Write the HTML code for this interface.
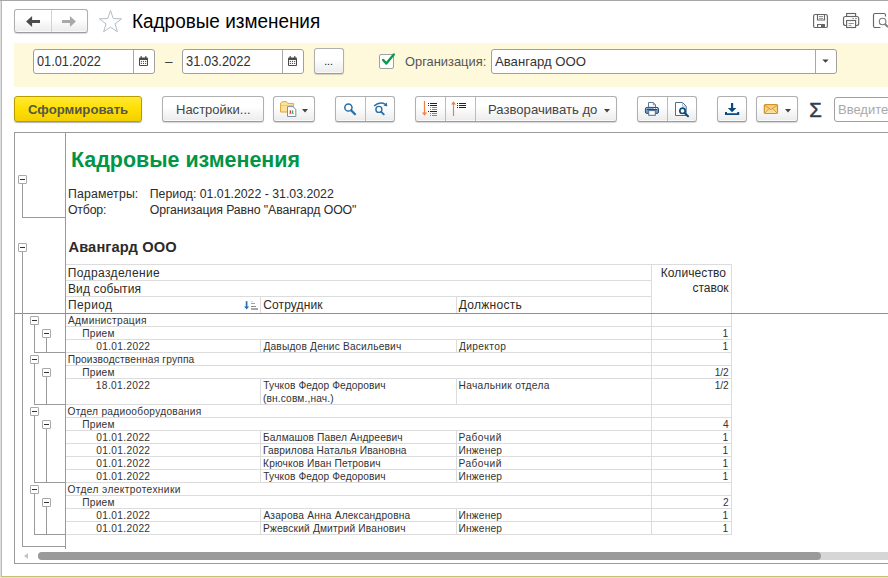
<!DOCTYPE html><html lang="ru"><head><meta charset="utf-8"><title>Кадровые изменения</title><style>
    *{box-sizing:border-box;margin:0;padding:0}
    html,body{width:888px;height:578px;overflow:hidden;background:#fff}
    body{position:relative;font-family:"Liberation Sans",sans-serif;font-size:13.33px;color:#333}
    .abs,.t,.btn,.inp,.ln,svg{position:absolute}
    .t{white-space:pre;line-height:1;transform-origin:0 0}
    .btn{border:1px solid #b0b0b0;border-bottom-color:#9c9c9c;border-radius:3px;background:linear-gradient(#ffffff 0%,#ffffff 40%,#ebebeb 100%);box-shadow:0 1px 1px rgba(0,0,0,.16),inset 0 -1px 0 rgba(255,255,255,.7)}
    .btn .sep{position:absolute;top:0;bottom:0;width:1px;background:#bcbcbc}
    .inp{border:1px solid #a0a0a0;border-radius:3px;background:#fff}
    .inp .sep{position:absolute;top:0;bottom:0;width:1px;background:#a8a8a8}
    .ln{background:#9a9a9a}
    .gl{position:absolute;background:#dcdcdc}
    .bx{position:absolute;width:9px;height:9px;border:1px solid #a8a8a8;background:#fff;border-radius:1px}
    .bx:after{content:"";position:absolute;left:1px;top:3px;width:5px;height:1px;background:#333}
    </style></head><body>
<div class="abs" style="left:0px;top:0px;width:888px;height:1px;background:#a6a6a6"></div>
<div class="abs" style="left:0px;top:1px;width:1px;height:577px;background:#dedede"></div>
<div class="abs" style="left:1px;top:1px;width:1px;height:576px;background:#cdbd72"></div>
<div class="abs" style="left:1px;top:576px;width:887px;height:1px;background:#cdbd72"></div>
<div class="abs" style="left:0px;top:577px;width:888px;height:1px;background:#dfe3e6"></div>
<div class="btn" style="left:14px;top:9px;width:74px;height:24px;"><div class="sep" style="left:36px;background:#d2d2d2"></div></div>
<svg style="left:14px;top:9px" width="74" height="24" viewBox="0 0 74 24" ><path d="M12.1 12.45 L18.1 6.9 V10.95 H26 V13.95 H18.1 V18 Z" fill="#4a4a4a"/><path d="M61.9 12.45 L55.9 6.9 V10.95 H48 V13.95 H55.9 V18 Z" fill="#a9a9a9"/></svg>
<svg style="left:98px;top:9px" width="26" height="26" viewBox="0 0 26 26" ><path d="M12.5 1.5 L15.3 9.6 L23.5 9.8 L17 14.9 L19.4 22.8 L12.5 18.1 L5.6 22.8 L8 14.9 L1.5 9.8 L9.7 9.6 Z" fill="none" stroke="#b4bcc4" stroke-width="1"/></svg>
<div class="t" style="left:132.00px;top:11px;font-size:20px;color:#000;transform:scaleX(0.9467);">Кадровые изменения</div>
<svg style="left:812px;top:12px" width="76" height="18" viewBox="0 0 76 18" ><g fill="none" stroke="#666" stroke-width="1.15"><rect x="1.6" y="2.5" width="13.8" height="13" rx="1.6"/><path d="M5.5 2.5 V8 H12.5 V2.5"/><path d="M7 4.5 H11 M7 6.4 H11" stroke="#777" stroke-width="0.8"/><path d="M5.6 15.5 V12.5 H12.4 V15.5"/><rect x="9" y="13" width="3" height="2.4" fill="#666" stroke="none"/><rect x="31.5" y="4.5" width="15.2" height="9" rx="2"/><rect x="34.6" y="1.5" width="9" height="3" fill="#fff"/><rect x="34.6" y="8.5" width="9" height="7" fill="#fff"/><path d="M36.6 11.5 H41.8 M36.6 13.4 H39.4" stroke="#777" stroke-width="0.8"/><path d="M40.3 6.6 H42 M43 6.6 H45" stroke="#777" stroke-width="0.8"/><path d="M73.5 4.6 V3 a1.5 1.5 0 0 0 -1.5 -1.5 H63 a1.5 1.5 0 0 0 -1.5 1.5 V14 a1.5 1.5 0 0 0 1.5 1.5 H68.4"/><circle cx="70.6" cy="9.5" r="3.3" stroke="#7a7a7a" stroke-width="1.1"/><path d="M73 12 L76 15" stroke-width="1.9" stroke="#7a7a7a"/></g></svg>
<div class="abs" style="left:14px;top:43px;width:874px;height:44px;background:#fff9db"></div>
<div class="inp" style="left:33px;top:49px;width:122px;height:25px;"><div class="sep" style="left:99px"></div></div>
<div class="t" style="left:37.00px;top:54px;font-size:14px;color:#333;transform:scaleX(0.9122);">01.01.2022</div>
<svg style="left:139px;top:56px" width="9" height="10" viewBox="0 0 9 10" ><g fill="#4a4a4a"><rect x="0" y="1.5" width="9" height="8.5" rx="1"/><rect x="1.6" y="0" width="1.2" height="2.2" rx=".5"/><rect x="6.2" y="0" width="1.2" height="2.2" rx=".5"/></g><rect x="1" y="4" width="7" height="5" fill="#fff"/><g fill="#4a4a4a"><rect x="1.8" y="4.9" width="1.1" height="1.1"/><rect x="3.95" y="4.9" width="1.1" height="1.1"/><rect x="6.1" y="4.9" width="1.1" height="1.1"/><rect x="1.8" y="6.9" width="1.1" height="1.1"/><rect x="3.95" y="6.9" width="1.1" height="1.1"/><rect x="6.1" y="6.9" width="1.1" height="1.1"/></g></svg>
<div class="inp" style="left:182px;top:49px;width:122px;height:25px;"><div class="sep" style="left:99px"></div></div>
<div class="t" style="left:186.00px;top:54px;font-size:14px;color:#333;transform:scaleX(0.9223);">31.03.2022</div>
<svg style="left:288px;top:56px" width="9" height="10" viewBox="0 0 9 10" ><g fill="#4a4a4a"><rect x="0" y="1.5" width="9" height="8.5" rx="1"/><rect x="1.6" y="0" width="1.2" height="2.2" rx=".5"/><rect x="6.2" y="0" width="1.2" height="2.2" rx=".5"/></g><rect x="1" y="4" width="7" height="5" fill="#fff"/><g fill="#4a4a4a"><rect x="1.8" y="4.9" width="1.1" height="1.1"/><rect x="3.95" y="4.9" width="1.1" height="1.1"/><rect x="6.1" y="4.9" width="1.1" height="1.1"/><rect x="1.8" y="6.9" width="1.1" height="1.1"/><rect x="3.95" y="6.9" width="1.1" height="1.1"/><rect x="6.1" y="6.9" width="1.1" height="1.1"/></g></svg>
<div class="t" style="left:165.00px;top:55px;font-size:13.6px;color:#333;">–</div>
<div class="btn" style="left:314px;top:48px;width:30px;height:26px;"></div>
<div class="t" style="left:324.17px;top:56px;font-size:10.67px;color:#111;letter-spacing:-0.048px;">...</div>
<div class="abs" style="left:379px;top:54px;width:15px;height:15px;border:1px solid #a0a0a0;border-radius:2px;background:#fff"></div>
<svg style="left:379px;top:50px" width="18" height="18" viewBox="0 0 18 18" ><path d="M4.2 9.9 L7.3 13.6 L14.8 4.4" fill="none" stroke="#0a9a4a" stroke-width="2.4" stroke-linecap="round" stroke-linejoin="round"/></svg>
<div class="t" style="left:405.00px;top:55px;font-size:13.6px;color:#555;transform:scaleX(0.9471);">Организация:</div>
<div class="inp" style="left:491px;top:49px;width:346px;height:25px;"><div class="sep" style="left:323px"></div></div>
<div class="t" style="left:495.00px;top:55px;font-size:13.6px;color:#333;transform:scaleX(0.9674);">Авангард ООО</div>
<svg style="left:822px;top:59px" width="7" height="4" viewBox="0 0 7 4" ><path d="M0.3 0.5 H6.7 L3.5 3.8 Z" fill="#444"/></svg>
<div class="abs" style="left:14px;top:96px;width:128px;height:26px;border:1px solid #b89c00;border-radius:3px;background:linear-gradient(#ffe838 0%,#ffe000 50%,#f2cf00 100%);box-shadow:0 1px 1px rgba(0,0,0,.3)"></div>
<div class="t" style="left:28.00px;top:103px;font-size:13.6px;color:#56564a;transform:scaleX(0.9671);font-weight:bold;">Сформировать</div>
<div class="btn" style="left:162px;top:96px;width:102px;height:26px;"></div>
<div class="t" style="left:176.00px;top:103px;font-size:13.6px;color:#444;transform:scaleX(0.9567);">Настройки...</div>
<div class="btn" style="left:273px;top:96px;width:42px;height:26px;"></div>
<svg style="left:279px;top:100px" width="20" height="18" viewBox="0 0 20 18" ><path d="M1.5 12 V3.2 L3.5 1.6 H7.2 L9 3.4 H14.4 V12 Z" fill="#fbe19a" stroke="#e0a838" stroke-width="1"/><path d="M1.5 5.5 H14.4" stroke="#f3c766" stroke-width="1"/><path d="M8.5 6.6 H14 L16.8 9.3 V16.5 H8.5 Z" fill="#fff" stroke="#7c8e9c" stroke-width="1" stroke-linejoin="round"/><rect x="10.7" y="10.4" width="1.3" height="3" fill="#e03030"/><rect x="12.9" y="10.4" width="1.3" height="3" fill="#30a850"/><rect x="10" y="13.4" width="5" height="0.7" fill="#999"/></svg>
<svg style="left:302px;top:109px" width="6" height="4" viewBox="0 0 6 4" ><path d="M0 0 H6 L3 3.5 Z" fill="#444"/></svg>
<div class="btn" style="left:335px;top:96px;width:60px;height:26px;"><div class="sep" style="left:29px"></div></div>
<svg style="left:340px;top:100px" width="50" height="18" viewBox="0 0 50 18" ><g fill="none" stroke="#2a6ea6"><circle cx="8.4" cy="7.5" r="3.6" stroke-width="1.5"/><path d="M11.2 10.4 L15 14.2" stroke-width="2.2" stroke-linecap="round"/><circle cx="38.9" cy="9.4" r="3" stroke-width="1.4"/><path d="M41.2 11.8 L43.8 14.4" stroke-width="1.9" stroke-linecap="round"/><path d="M34.2 5.8 Q39.6 1.4 45.2 4.2" stroke-width="1.5"/></g><path d="M46.9 2.4 L47.3 6.6 L43.4 5.4 Z" fill="#2a6ea6"/></svg>
<div class="btn" style="left:415px;top:96px;width:202px;height:26px;"><div class="sep" style="left:29px"></div><div class="sep" style="left:59px"></div></div>
<svg style="left:420px;top:100px" width="50" height="18" viewBox="0 0 50 18" ><g stroke="#f08040" fill="#f08040"><path d="M4.5 1 V14" stroke-width="1.2"/><path d="M2 12.6 H7 L4.5 15.8 Z" stroke="none"/><path d="M33.5 3 V16" stroke-width="1.2"/><path d="M31 4.4 H36 L33.5 1.2 Z" stroke="none"/></g><g fill="#222"><rect x="8" y="3" width="1" height="1"/><rect x="10" y="3" width="7" height="1"/><rect x="8" y="5" width="1" height="1"/><rect x="10" y="5" width="7" height="1"/><rect x="8" y="11" width="1" height="1"/><rect x="10" y="11" width="7" height="1"/><rect x="37" y="3" width="1" height="1"/><rect x="39" y="3" width="7" height="1"/><rect x="37" y="5" width="1" height="1"/><rect x="39" y="5" width="7" height="1"/><rect x="37" y="7" width="1" height="1"/><rect x="39" y="7" width="7" height="1"/></g><g fill="#8a8a8a"><rect x="10" y="7" width="1" height="1"/><rect x="12" y="7" width="5" height="1"/><rect x="10" y="9" width="1" height="1"/><rect x="12" y="9" width="5" height="1"/><rect x="10" y="13" width="1" height="1"/><rect x="12" y="13" width="5" height="1"/><rect x="10" y="15" width="1" height="1"/><rect x="12" y="15" width="5" height="1"/></g></svg>
<div class="t" style="left:488.00px;top:103px;font-size:13.6px;color:#444;transform:scaleX(0.9653);">Разворачивать до</div>
<svg style="left:604px;top:109px" width="6" height="4" viewBox="0 0 6 4" ><path d="M0 0 H6 L3 3.5 Z" fill="#444"/></svg>
<div class="btn" style="left:637px;top:96px;width:60px;height:26px;"><div class="sep" style="left:29px"></div></div>
<svg style="left:642px;top:100px" width="50" height="18" viewBox="0 0 50 18" ><path d="M6.5 7.4 V2.5 H11.3 L13.5 4.8 V7.4" fill="#fff" stroke="#64798f" stroke-width="1"/><path d="M11.3 2.5 V4.8 H13.5" fill="none" stroke="#64798f" stroke-width="0.8"/><rect x="3.4" y="7.4" width="13.1" height="6" rx="1.5" fill="#6f99c4" stroke="#1f4f80" stroke-width="1"/><rect x="4" y="8" width="11.9" height="1" fill="#86a9cf"/><rect x="5" y="9" width="10" height="1" fill="#274a72"/><rect x="11.9" y="8" width="1.1" height="1" fill="#fff"/><rect x="14" y="8" width="1.1" height="1" fill="#fff"/><rect x="6.7" y="10.6" width="6.6" height="4.7" fill="#fff" stroke="#4f6f8f" stroke-width="1"/><path d="M33.5 2.5 H40.5 L44.2 6.2 V15.5 H33.5 Z" fill="#fff" stroke="#4f6f8f" stroke-width="1" stroke-linejoin="round"/><path d="M40.5 2.5 V6.2 H44.2" fill="none" stroke="#9ab" stroke-width="0.8"/><circle cx="40.5" cy="10.8" r="2.7" fill="#fff" stroke="#0c4c7c" stroke-width="1.7"/><path d="M42.6 13 L46 16.2" stroke="#0c4c7c" stroke-width="2.1" stroke-linecap="round"/></svg>
<div class="btn" style="left:717px;top:96px;width:30px;height:26px;"></div>
<svg style="left:724px;top:102px" width="16" height="14" viewBox="0 0 16 14" ><g fill="#0a4a80"><rect x="7" y="1" width="2.2" height="6"/><path d="M3.8 6 H12.4 L8.1 10.2 Z"/><path d="M1 10 H3 V11.2 H13.2 V10 H15.2 V13 H1 Z"/></g></svg>
<div class="btn" style="left:756px;top:96px;width:42px;height:26px;"></div>
<svg style="left:763px;top:103px" width="16" height="12" viewBox="0 0 16 12" ><defs><linearGradient id="eg" x1="0" y1="0" x2="0" y2="1"><stop offset="0" stop-color="#f3c772"/><stop offset="1" stop-color="#fae3a6"/></linearGradient></defs><rect x="1.3" y="1.5" width="13.2" height="9" rx="1.2" fill="url(#eg)" stroke="#cf9228" stroke-width="1.2"/><path d="M2 2.3 L7.9 6.6 L13.8 2.3 M2 9.8 L6 5.6 M13.8 9.8 L9.8 5.6" fill="none" stroke="#d49a34" stroke-width="1"/></svg>
<svg style="left:785px;top:109px" width="6" height="4" viewBox="0 0 6 4" ><path d="M0 0 H6 L3 3.5 Z" fill="#444"/></svg>
<div class="t" style="left:809.25px;top:100px;font-size:20.3px;color:#2c3e52;-webkit-text-stroke:0.55px #2c3e52;">Σ</div>
<div class="inp" style="left:834px;top:97px;width:60px;height:25px;"></div>
<div class="t" style="left:838.00px;top:103px;font-size:13.6px;color:#a9a9a9;transform:scaleX(0.9550);">Введите</div>
<div class="ln" style="left:14px;top:132px;width:874px;height:1px;"></div>
<div class="ln" style="left:14px;top:132px;width:1px;height:432px;"></div>
<div class="ln" style="left:65px;top:132px;width:1px;height:417px;"></div>
<div class="ln" style="left:14px;top:563px;width:874px;height:1px;"></div>
<div class="abs" style="left:38px;top:552px;width:850px;height:8px;background:#d6d6d6;border-radius:4px 0 0 4px"></div>
<div class="abs" style="left:38px;top:552px;width:783px;height:8px;background:#9a9a9a;border-radius:4px"></div>
<svg style="left:24px;top:553px" width="4" height="6" viewBox="0 0 4 6" ><path d="M4 0 V6 L0 3 Z" fill="#c4c4c4"/></svg>
<div class="t" style="left:71.00px;top:149px;font-size:22.2px;color:#009646;transform:scaleX(0.9658);font-weight:bold;">Кадровые изменения</div>
<div class="t" style="left:67.99px;top:188px;font-size:12.3px;color:#2b2b2b;letter-spacing:0.149px;">Параметры:</div>
<div class="t" style="left:149.79px;top:188px;font-size:12.3px;color:#2b2b2b;">Период: 01.01.2022 - 31.03.2022</div>
<div class="t" style="left:67.92px;top:204px;font-size:12.3px;color:#2b2b2b;letter-spacing:-0.171px;">Отбор:</div>
<div class="t" style="left:149.72px;top:204px;font-size:12.3px;color:#2b2b2b;letter-spacing:-0.094px;">Организация Равно "Авангард ООО"</div>
<div class="t" style="left:68.47px;top:240px;font-size:14.67px;color:#2b2b2b;letter-spacing:0.119px;font-weight:bold;">Авангард ООО</div>
<div class="gl" style="left:66px;top:264px;width:586px;height:1px;"></div>
<div class="gl" style="left:66px;top:280px;width:586px;height:1px;"></div>
<div class="gl" style="left:66px;top:296px;width:586px;height:1px;"></div>
<div class="gl" style="left:652px;top:264px;width:80px;height:1px;"></div>
<div class="gl" style="left:651px;top:264px;width:1px;height:49px;"></div>
<div class="gl" style="left:731px;top:264px;width:1px;height:49px;"></div>
<div class="gl" style="left:260px;top:297px;width:1px;height:16px;"></div>
<div class="gl" style="left:456px;top:297px;width:1px;height:16px;"></div>
<div class="t" style="left:67.81px;top:267px;font-size:12px;color:#2b2b2b;letter-spacing:0.377px;">Подразделение</div>
<div class="t" style="left:68.01px;top:283px;font-size:12px;color:#2b2b2b;letter-spacing:0.093px;">Вид события</div>
<div class="t" style="left:68.01px;top:299px;font-size:12px;color:#2b2b2b;letter-spacing:0.393px;">Период</div>
<div class="t" style="left:263.14px;top:299px;font-size:12px;color:#2b2b2b;letter-spacing:0.148px;">Сотрудник</div>
<div class="t" style="left:458.80px;top:299px;font-size:12px;color:#2b2b2b;letter-spacing:0.274px;">Должность</div>
<div class="t" style="left:660.71px;top:267px;font-size:12px;color:#2b2b2b;letter-spacing:0.092px;">Количество</div>
<div class="t" style="left:692.42px;top:282px;font-size:12px;color:#2b2b2b;">ставок</div>
<svg style="left:243px;top:300px" width="16" height="12" viewBox="0 0 16 12" ><path d="M3.6 1.2 V8" stroke="#2a6fb0" stroke-width="1.7"/><path d="M1.1 6.6 H6.1 L3.6 9.6 Z" fill="#2a6fb0"/><rect x="8" y="1" width="2" height="1" fill="#d4d4d4"/><rect x="8" y="3" width="4" height="1" fill="#a0a0a0"/><rect x="8" y="6" width="5" height="1" fill="#8a8a8a"/><rect x="8" y="8" width="7" height="2" fill="#a8a8a8"/></svg>
<div class="abs" style="left:14px;top:313px;width:874px;height:1px;background:#8e8e8e"></div>
<div class="t" style="left:68.00px;top:316px;font-size:10.2px;color:#333;letter-spacing:0.301px;">Администрация</div>
<div class="gl" style="left:66px;top:326px;width:666px;height:1px;"></div>
<div class="gl" style="left:651px;top:314px;width:1px;height:12px;"></div>
<div class="gl" style="left:731px;top:314px;width:1px;height:12px;"></div>
<div class="t" style="left:82.25px;top:329px;font-size:10.2px;color:#333;letter-spacing:0.199px;">Прием</div>
<div class="t" style="left:722.48px;top:329px;font-size:10.2px;color:#333;">1</div>
<div class="gl" style="left:66px;top:339px;width:666px;height:1px;"></div>
<div class="gl" style="left:651px;top:327px;width:1px;height:12px;"></div>
<div class="gl" style="left:731px;top:327px;width:1px;height:12px;"></div>
<div class="t" style="left:96.18px;top:342px;font-size:10.2px;color:#333;letter-spacing:0.320px;">01.01.2022</div>
<div class="t" style="left:263.40px;top:342px;font-size:10.2px;color:#333;letter-spacing:0.189px;">Давыдов Денис Васильевич</div>
<div class="t" style="left:458.90px;top:342px;font-size:10.2px;color:#333;letter-spacing:0.383px;">Директор</div>
<div class="t" style="left:722.48px;top:342px;font-size:10.2px;color:#333;">1</div>
<div class="gl" style="left:66px;top:352px;width:666px;height:1px;"></div>
<div class="gl" style="left:260px;top:340px;width:1px;height:12px;"></div>
<div class="gl" style="left:456px;top:340px;width:1px;height:12px;"></div>
<div class="gl" style="left:651px;top:340px;width:1px;height:12px;"></div>
<div class="gl" style="left:731px;top:340px;width:1px;height:12px;"></div>
<div class="t" style="left:67.65px;top:355px;font-size:10.2px;color:#333;letter-spacing:0.177px;">Производственная группа</div>
<div class="gl" style="left:66px;top:365px;width:666px;height:1px;"></div>
<div class="gl" style="left:651px;top:353px;width:1px;height:12px;"></div>
<div class="gl" style="left:731px;top:353px;width:1px;height:12px;"></div>
<div class="t" style="left:82.25px;top:368px;font-size:10.2px;color:#333;letter-spacing:0.199px;">Прием</div>
<div class="t" style="left:714.83px;top:368px;font-size:10.2px;color:#333;letter-spacing:-0.197px;">1/2</div>
<div class="gl" style="left:66px;top:378px;width:666px;height:1px;"></div>
<div class="gl" style="left:651px;top:366px;width:1px;height:12px;"></div>
<div class="gl" style="left:731px;top:366px;width:1px;height:12px;"></div>
<div class="t" style="left:95.86px;top:381px;font-size:10.2px;color:#333;letter-spacing:0.345px;">18.01.2022</div>
<div class="t" style="left:263.24px;top:381px;font-size:10.2px;color:#333;letter-spacing:0.092px;">Тучков Федор Федорович</div>
<div class="t" style="left:262.92px;top:394px;font-size:10.2px;color:#333;letter-spacing:0.148px;">(вн.совм.,нач.)</div>
<div class="t" style="left:458.55px;top:381px;font-size:10.2px;color:#333;letter-spacing:0.300px;">Начальник отдела</div>
<div class="t" style="left:714.83px;top:381px;font-size:10.2px;color:#333;letter-spacing:-0.197px;">1/2</div>
<div class="gl" style="left:66px;top:404px;width:666px;height:1px;"></div>
<div class="gl" style="left:260px;top:379px;width:1px;height:25px;"></div>
<div class="gl" style="left:456px;top:379px;width:1px;height:25px;"></div>
<div class="gl" style="left:651px;top:379px;width:1px;height:25px;"></div>
<div class="gl" style="left:731px;top:379px;width:1px;height:25px;"></div>
<div class="t" style="left:67.52px;top:407px;font-size:10.2px;color:#333;letter-spacing:0.266px;">Отдел радиооборудования</div>
<div class="gl" style="left:66px;top:417px;width:666px;height:1px;"></div>
<div class="gl" style="left:651px;top:405px;width:1px;height:12px;"></div>
<div class="gl" style="left:731px;top:405px;width:1px;height:12px;"></div>
<div class="t" style="left:82.25px;top:420px;font-size:10.2px;color:#333;letter-spacing:0.199px;">Прием</div>
<div class="t" style="left:722.94px;top:420px;font-size:10.2px;color:#333;">4</div>
<div class="gl" style="left:66px;top:430px;width:666px;height:1px;"></div>
<div class="gl" style="left:651px;top:418px;width:1px;height:12px;"></div>
<div class="gl" style="left:731px;top:418px;width:1px;height:12px;"></div>
<div class="t" style="left:96.18px;top:433px;font-size:10.2px;color:#333;letter-spacing:0.320px;">01.01.2022</div>
<div class="t" style="left:263.05px;top:433px;font-size:10.2px;color:#333;letter-spacing:0.098px;">Балмашов Павел Андреевич</div>
<div class="t" style="left:458.55px;top:433px;font-size:10.2px;color:#333;letter-spacing:0.451px;">Рабочий</div>
<div class="t" style="left:722.48px;top:433px;font-size:10.2px;color:#333;">1</div>
<div class="gl" style="left:66px;top:443px;width:666px;height:1px;"></div>
<div class="gl" style="left:260px;top:431px;width:1px;height:12px;"></div>
<div class="gl" style="left:456px;top:431px;width:1px;height:12px;"></div>
<div class="gl" style="left:651px;top:431px;width:1px;height:12px;"></div>
<div class="gl" style="left:731px;top:431px;width:1px;height:12px;"></div>
<div class="t" style="left:96.18px;top:446px;font-size:10.2px;color:#333;letter-spacing:0.320px;">01.01.2022</div>
<div class="t" style="left:263.05px;top:446px;font-size:10.2px;color:#333;letter-spacing:0.067px;">Гаврилова Наталья Ивановна</div>
<div class="t" style="left:458.55px;top:446px;font-size:10.2px;color:#333;letter-spacing:0.170px;">Инженер</div>
<div class="t" style="left:722.48px;top:446px;font-size:10.2px;color:#333;">1</div>
<div class="gl" style="left:66px;top:456px;width:666px;height:1px;"></div>
<div class="gl" style="left:260px;top:444px;width:1px;height:12px;"></div>
<div class="gl" style="left:456px;top:444px;width:1px;height:12px;"></div>
<div class="gl" style="left:651px;top:444px;width:1px;height:12px;"></div>
<div class="gl" style="left:731px;top:444px;width:1px;height:12px;"></div>
<div class="t" style="left:96.18px;top:459px;font-size:10.2px;color:#333;letter-spacing:0.320px;">01.01.2022</div>
<div class="t" style="left:263.05px;top:459px;font-size:10.2px;color:#333;letter-spacing:0.145px;">Крючков Иван Петрович</div>
<div class="t" style="left:458.55px;top:459px;font-size:10.2px;color:#333;letter-spacing:0.451px;">Рабочий</div>
<div class="t" style="left:722.48px;top:459px;font-size:10.2px;color:#333;">1</div>
<div class="gl" style="left:66px;top:469px;width:666px;height:1px;"></div>
<div class="gl" style="left:260px;top:457px;width:1px;height:12px;"></div>
<div class="gl" style="left:456px;top:457px;width:1px;height:12px;"></div>
<div class="gl" style="left:651px;top:457px;width:1px;height:12px;"></div>
<div class="gl" style="left:731px;top:457px;width:1px;height:12px;"></div>
<div class="t" style="left:96.18px;top:472px;font-size:10.2px;color:#333;letter-spacing:0.320px;">01.01.2022</div>
<div class="t" style="left:263.24px;top:472px;font-size:10.2px;color:#333;letter-spacing:0.092px;">Тучков Федор Федорович</div>
<div class="t" style="left:458.55px;top:472px;font-size:10.2px;color:#333;letter-spacing:0.170px;">Инженер</div>
<div class="t" style="left:722.48px;top:472px;font-size:10.2px;color:#333;">1</div>
<div class="gl" style="left:66px;top:482px;width:666px;height:1px;"></div>
<div class="gl" style="left:260px;top:470px;width:1px;height:12px;"></div>
<div class="gl" style="left:456px;top:470px;width:1px;height:12px;"></div>
<div class="gl" style="left:651px;top:470px;width:1px;height:12px;"></div>
<div class="gl" style="left:731px;top:470px;width:1px;height:12px;"></div>
<div class="t" style="left:67.52px;top:485px;font-size:10.2px;color:#333;letter-spacing:0.377px;">Отдел электротехники</div>
<div class="gl" style="left:66px;top:495px;width:666px;height:1px;"></div>
<div class="gl" style="left:651px;top:483px;width:1px;height:12px;"></div>
<div class="gl" style="left:731px;top:483px;width:1px;height:12px;"></div>
<div class="t" style="left:82.25px;top:498px;font-size:10.2px;color:#333;letter-spacing:0.199px;">Прием</div>
<div class="t" style="left:723.08px;top:498px;font-size:10.2px;color:#333;">2</div>
<div class="gl" style="left:66px;top:508px;width:666px;height:1px;"></div>
<div class="gl" style="left:651px;top:496px;width:1px;height:12px;"></div>
<div class="gl" style="left:731px;top:496px;width:1px;height:12px;"></div>
<div class="t" style="left:96.18px;top:511px;font-size:10.2px;color:#333;letter-spacing:0.320px;">01.01.2022</div>
<div class="t" style="left:263.40px;top:511px;font-size:10.2px;color:#333;letter-spacing:0.189px;">Азарова Анна Александровна</div>
<div class="t" style="left:458.55px;top:511px;font-size:10.2px;color:#333;letter-spacing:0.170px;">Инженер</div>
<div class="t" style="left:722.48px;top:511px;font-size:10.2px;color:#333;">1</div>
<div class="gl" style="left:66px;top:521px;width:666px;height:1px;"></div>
<div class="gl" style="left:260px;top:509px;width:1px;height:12px;"></div>
<div class="gl" style="left:456px;top:509px;width:1px;height:12px;"></div>
<div class="gl" style="left:651px;top:509px;width:1px;height:12px;"></div>
<div class="gl" style="left:731px;top:509px;width:1px;height:12px;"></div>
<div class="t" style="left:96.18px;top:524px;font-size:10.2px;color:#333;letter-spacing:0.320px;">01.01.2022</div>
<div class="t" style="left:263.05px;top:524px;font-size:10.2px;color:#333;letter-spacing:0.167px;">Ржевский Дмитрий Иванович</div>
<div class="t" style="left:458.55px;top:524px;font-size:10.2px;color:#333;letter-spacing:0.170px;">Инженер</div>
<div class="t" style="left:722.48px;top:524px;font-size:10.2px;color:#333;">1</div>
<div class="gl" style="left:66px;top:534px;width:666px;height:1px;"></div>
<div class="gl" style="left:260px;top:522px;width:1px;height:12px;"></div>
<div class="gl" style="left:456px;top:522px;width:1px;height:12px;"></div>
<div class="gl" style="left:651px;top:522px;width:1px;height:12px;"></div>
<div class="gl" style="left:731px;top:522px;width:1px;height:12px;"></div>
<div class="ln" style="left:22px;top:184px;width:1px;height:34px;"></div>
<div class="ln" style="left:22px;top:217px;width:43px;height:1px;"></div>
<div class="bx" style="left:18px;top:175px"></div>
<div class="ln" style="left:22px;top:252px;width:1px;height:295px;"></div>
<div class="ln" style="left:22px;top:546px;width:43px;height:1px;"></div>
<div class="bx" style="left:18px;top:243px"></div>
<div class="ln" style="left:34px;top:325px;width:1px;height:28px;"></div>
<div class="ln" style="left:34px;top:352px;width:31px;height:1px;"></div>
<div class="bx" style="left:30px;top:316px"></div>
<div class="ln" style="left:46px;top:338px;width:1px;height:15px;"></div>
<div class="bx" style="left:42px;top:329px"></div>
<div class="ln" style="left:34px;top:364px;width:1px;height:41px;"></div>
<div class="ln" style="left:34px;top:404px;width:31px;height:1px;"></div>
<div class="bx" style="left:30px;top:355px"></div>
<div class="ln" style="left:46px;top:377px;width:1px;height:28px;"></div>
<div class="bx" style="left:42px;top:368px"></div>
<div class="ln" style="left:34px;top:416px;width:1px;height:67px;"></div>
<div class="ln" style="left:34px;top:482px;width:31px;height:1px;"></div>
<div class="bx" style="left:30px;top:407px"></div>
<div class="ln" style="left:46px;top:429px;width:1px;height:54px;"></div>
<div class="bx" style="left:42px;top:420px"></div>
<div class="ln" style="left:34px;top:494px;width:1px;height:41px;"></div>
<div class="ln" style="left:34px;top:534px;width:31px;height:1px;"></div>
<div class="bx" style="left:30px;top:485px"></div>
<div class="ln" style="left:46px;top:507px;width:1px;height:28px;"></div>
<div class="bx" style="left:42px;top:498px"></div>
</body></html>
